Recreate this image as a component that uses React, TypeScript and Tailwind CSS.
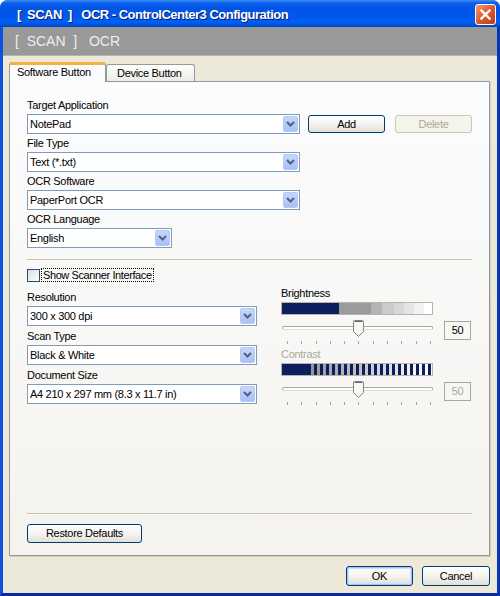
import React from "react"

const Chevron = () => (
  <svg width="9" height="6" viewBox="0 0 9 6">
    <path d="M1 1 L4.5 4.5 L8 1" fill="none" stroke="#4D6185" strokeWidth="2" />
  </svg>
)

function Combo({ value, w }: { value: string; w: string }) {
  return (
    <div className={`${w} h-[20px] flex border border-[#7F9DB9] bg-white`}>
      <div className="flex-1 pl-[2px] leading-[18px] text-black whitespace-pre">{value}</div>
      <div className="m-px w-[15px] rounded-[2px] border border-[#B4C8F3] bg-gradient-to-b from-[#C6D6FC] to-[#ABC1F4] flex items-center justify-center">
        <Chevron />
      </div>
    </div>
  )
}

function Label({ children, gray }: { children: React.ReactNode; gray?: boolean }) {
  return <div className={`h-[15px] leading-[13px] ${gray ? "text-[#ACA899]" : "text-black"}`}>{children}</div>
}

function XpButton({ children, w, disabled, isDefault }: { children: React.ReactNode; w: string; disabled?: boolean; isDefault?: boolean }) {
  if (disabled) {
    return (
      <div className={`${w} h-[18px] rounded-[3px] border border-[#C9C7BA] bg-[#F5F4EA] text-[#ACA899] flex items-center justify-center`}>
        {children}
      </div>
    )
  }
  return (
    <div
      className={`${w} h-full rounded-[3px] border border-[#003C74] bg-gradient-to-b from-white via-[#F5F4F0] to-[#E2E0D6] flex items-center justify-center text-black ${
        isDefault ? "shadow-[inset_0_0_0_1px_#A9C4F2,inset_0_0_0_2px_#CFE0FB]" : ""
      }`}
    >
      {children}
    </div>
  )
}

function Thumb() {
  return (
    <svg width="11" height="17" viewBox="0 0 11 17">
      <path d="M0.5 1.5 Q0.5 0.5 1.5 0.5 H9.5 Q10.5 0.5 10.5 1.5 V11.5 L5.5 16.5 L0.5 11.5 Z" fill="#F7F7F4" stroke="#85847F" />
      <path d="M1.5 1.5 H9.5" stroke="#5F6B84" />
    </svg>
  )
}

function Slider() {
  const ticks = Array.from({ length: 11 })
  return (
    <div className="relative w-[152px] h-[27px]">
      <div className="absolute left-[1px] right-0 top-[6px] h-[4px] rounded-[2px] border border-[#A9A8A2] border-b-[#E0DFD8] bg-white" />
      <div className="absolute left-[72px] top-0">
        <Thumb />
      </div>
      <div className="absolute left-0 right-0 top-[21px] flex justify-between pl-[6px] pr-[2px]">
        {ticks.map((_, i) => (
          <div key={i} className="w-px h-[3px] bg-[#A2A19B]" />
        ))}
      </div>
    </div>
  )
}

function ValueBox({ gray }: { gray?: boolean }) {
  return (
    <div
      className={`ml-[11px] mt-[1px] w-[27px] h-[19px] border border-[#A8A79F] flex items-center justify-center ${
        gray ? "text-[#ACA899]" : "text-black"
      }`}
    >
      50
    </div>
  )
}

export default function App() {
  const stripes = Array.from({ length: 20 })
  return (
    <div className="w-[500px] h-[596px] flex flex-col rounded-t-[8px] overflow-hidden bg-[#0054E3] font-['Liberation_Sans',Arial,sans-serif] text-[11px] tracking-[-0.3px] text-black">
      {/* Title bar */}
      <div className="h-[27px] shrink-0 flex items-center pl-[17px] pr-[4px] bg-[linear-gradient(to_bottom,#3D8DF5_0%,#0A5EEB_12%,#0055E5_30%,#0057EC_60%,#0060F5_80%,#0052DA_94%,#0040B0_100%)]">
        <span className="flex-1 pt-[3px] text-[13px] font-bold text-white whitespace-pre tracking-[-0.5px] [text-shadow:1px_1px_0_#0A1A6A]">
          [  SCAN  ]   OCR - ControlCenter3 Configuration
        </span>
        <div className="mt-[2px] w-[21px] h-[21px] rounded-[3px] border border-white bg-gradient-to-br from-[#EE9A78] via-[#DA5A32] to-[#C13A12] flex items-center justify-center">
          <svg width="11" height="11" viewBox="0 0 11 11">
            <path d="M1.5 1.5 L9.5 9.5 M9.5 1.5 L1.5 9.5" stroke="white" strokeWidth="2.4" strokeLinecap="square" />
          </svg>
        </div>
      </div>

      {/* Window body */}
      <div className="flex-1 flex flex-col border-l-[3px] border-r-[3px] border-b-[3px] border-l-[#0B50E0] border-r-[#0733B8] border-b-[#0A2AA0]">
        {/* Gray header band */}
        <div className="h-[29px] shrink-0 bg-[#999999] border-b border-[#B4B4B4] flex items-center pl-[12px] text-[14px] tracking-normal text-[#EEEEEE] whitespace-pre">
          [  SCAN  ]   OCR
        </div>

        {/* Dialog area */}
        <div className="flex-1 bg-[#ECE9D8] flex flex-col pt-[6px] pl-[6px] pr-[7px]">
          {/* Tabs */}
          <div className="h-[19px] flex items-end relative z-10">
            <div className="w-[97px] h-[20px] -mb-px rounded-t-[3px] border-x border-[#919B9C] border-t-[3px] border-t-[#F5B042] bg-[#FCFCFE] pl-[7px] leading-[14px]">
              Software Button
            </div>
            <div className="w-[89px] h-[17px] rounded-t-[3px] border border-b-0 border-[#919B9C] bg-gradient-to-b from-white to-[#ECEBE5] pl-[10px] leading-[16px]">
              Device Button
            </div>
          </div>

          {/* Panel */}
          <div className="h-[475px] flex flex-col border border-[#919B9C] bg-gradient-to-b from-[#FCFCFE] to-[#F4F3EE] shadow-[1px_1px_0_#D0CEBF] pt-[17px] pl-[17px] pr-[17px] pb-[12px]">
            <Label>Target Application</Label>
            <div className="flex items-center">
              <Combo value="NotePad" w="w-[273px]" />
              <div className="ml-[8px] h-[18px]">
                <XpButton w="w-[77px]">Add</XpButton>
              </div>
              <div className="ml-[10px]">
                <XpButton w="w-[77px]" disabled>
                  Delete
                </XpButton>
              </div>
            </div>

            <div className="mt-[3px]">
              <Label>File Type</Label>
              <Combo value="Text (*.txt)" w="w-[273px]" />
            </div>
            <div className="mt-[3px]">
              <Label>OCR Software</Label>
              <Combo value="PaperPort OCR" w="w-[273px]" />
            </div>
            <div className="mt-[3px]">
              <Label>OCR Language</Label>
              <Combo value="English" w="w-[145px]" />
            </div>

            <div className="mt-[11px] h-[2px] border-t border-[#C5C2B2] border-b border-b-white" />

            <div className="mt-[7px] flex items-center h-[14px]">
              <div className="w-[13px] h-[13px] border border-[#1C5180] bg-gradient-to-br from-[#DCDCD7] to-white" />
              <div className="ml-[1px] h-[14px] border border-dotted border-black px-[1px] leading-[12px] tracking-[-0.4px]">
                Show Scanner Interface
              </div>
            </div>

            <div className="mt-[5px] flex">
              {/* Left column */}
              <div className="w-[230px] pt-[4px]">
                <Label>Resolution</Label>
                <Combo value="300 x 300 dpi" w="w-[230px]" />
                <div className="mt-[4px]">
                  <Label>Scan Type</Label>
                  <Combo value="Black & White" w="w-[230px]" />
                </div>
                <div className="mt-[4px]">
                  <Label>Document Size</Label>
                  <Combo value="A4 210 x 297 mm (8.3 x 11.7 in)" w="w-[230px]" />
                </div>
              </div>

              {/* Right column */}
              <div className="ml-[24px] w-[190px]">
                <Label>Brightness</Label>
                <div className="w-[152px] h-[13px] border border-[#B5B4AE] flex">
                  <div className="w-[57px] bg-[#0C1E5B]" />
                  <div className="w-[32px] bg-[#9B9B9B]" />
                  <div className="w-[11px] bg-[#B4B4B4]" />
                  <div className="w-[12px] bg-[#CBCBCB]" />
                  <div className="w-[10px] bg-[#D8D8D8]" />
                  <div className="w-[10px] bg-[#E5E5E5]" />
                  <div className="w-[10px] bg-[#F2F2F2]" />
                  <div className="flex-1 bg-white" />
                </div>
                <div className="mt-[5px] flex">
                  <Slider />
                  <ValueBox />
                </div>

                <div className="mt-px">
                  <Label gray>Contrast</Label>
                </div>
                <div className="w-[152px] h-[13px] border border-[#B5B4AE] flex">
                  <div className="w-[29px] bg-[#0C1E5B]" />
                  {stripes.map((_, i) => {
                    const v = Math.round(150 + (105 * i) / 19)
                    return (
                      <React.Fragment key={i}>
                        <div className="w-[3px]" style={{ backgroundColor: `rgb(${v},${v},${v})` }} />
                        <div className="w-[3px] bg-[#0C1E5B]" />
                      </React.Fragment>
                    )
                  })}
                  <div className="flex-1 bg-white" />
                </div>
                <div className="mt-[5px] flex">
                  <Slider />
                  <ValueBox gray />
                </div>
              </div>
            </div>

            {/* Bottom */}
            <div className="mt-auto">
              <div className="h-[2px] border-t border-[#C5C2B2] border-b border-b-white" />
              <div className="mt-[9px] h-[19px] w-[115px]">
                <XpButton w="w-[115px]">Restore Defaults</XpButton>
              </div>
            </div>
          </div>

          {/* Dialog buttons */}
          <div className="mt-[10px] h-[20px] flex justify-end gap-[9px]">
            <XpButton w="w-[67px]" isDefault>
              OK
            </XpButton>
            <XpButton w="w-[68px]">Cancel</XpButton>
          </div>
        </div>
      </div>
    </div>
  )
}
